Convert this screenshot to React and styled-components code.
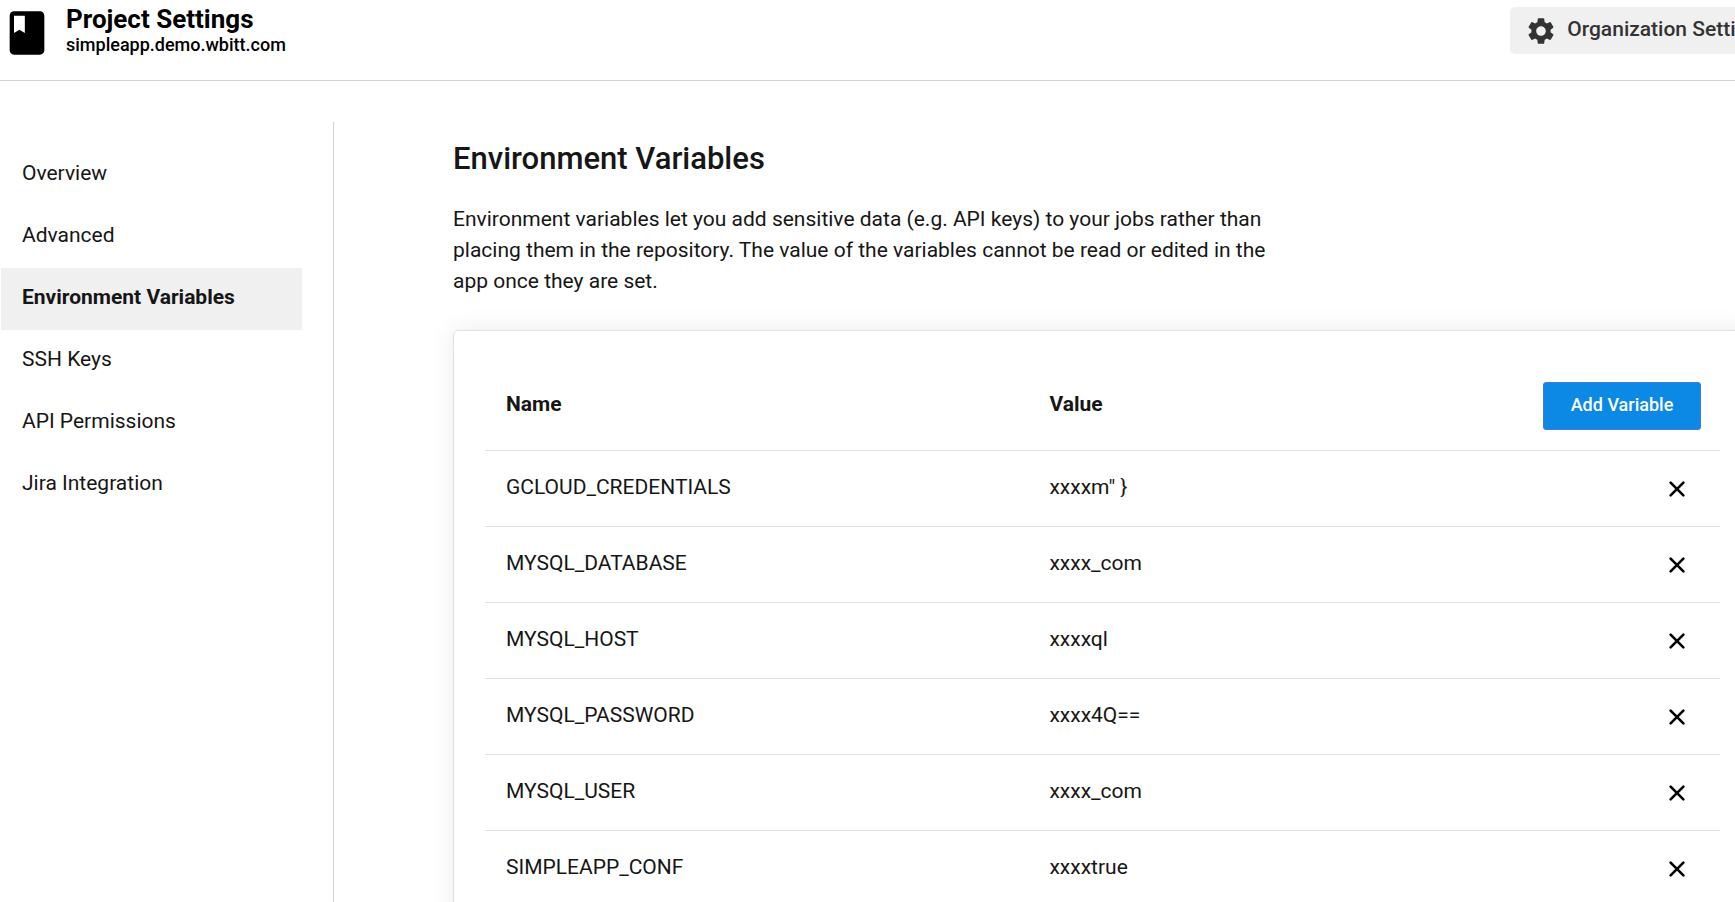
import React from "react";
import styled, { createGlobalStyle } from "styled-components";
import { MdBook, MdSettings } from "react-icons/md";

const GlobalStyle = createGlobalStyle`
  *, *::before, *::after { box-sizing: border-box; }
  html { scrollbar-width: none; }
  body {
    margin: 0;
    background: #fff;
    color: #161616;
    font-family: Roboto, "Liberation Sans", sans-serif;
    font-size: 21px;
    line-height: 31px;
  }
`;

const Page = styled.div`
  overflow-x: clip;
`;

const Header = styled.header`
  display: flex;
  align-items: flex-start;
  height: 81px;
  padding: 7px 0 0 1px;
  border-bottom: 1px solid #d2d2d2;
  color: #000;
`;

const Heading = styled.div`
  flex: 1;
  padding-left: 13px;
`;

const Title = styled.h1`
  margin: 0;
  font-size: 26px;
  font-weight: 700;
  line-height: 24px;
`;

const Domain = styled.p`
  margin: 0;
  font-size: 18px;
  font-weight: 500;
  line-height: 28px;
`;

const OrgButton = styled.button`
  display: flex;
  align-items: center;
  gap: 10px;
  height: 47px;
  margin-right: -50px;
  padding: 0 15px;
  border: 0;
  border-radius: 5px;
  background: #f0f0f0;
  color: #333;
  font: inherit;
  font-weight: 500;
  white-space: nowrap;
`;

const OrgLabel = styled.span`
  padding-bottom: 2px;
`;

const Body = styled.div`
  display: flex;
  align-items: stretch;
  padding-top: 41px;
`;

const Sidebar = styled.nav`
  flex: none;
  width: 334px;
  padding: 22px 31px 0 1px;
  border-right: 1px solid #d2d2d2;
`;

const NavLink = styled.a`
  display: flex;
  align-items: center;
  height: 62px;
  padding: 0 21px 3px;
  background: ${(p) => (p.$active ? "#f0f0f0" : "transparent")};
  color: inherit;
  font-weight: ${(p) => (p.$active ? 700 : 400)};
  text-decoration: none;
`;

const Main = styled.main`
  flex: 1;
  min-width: 0;
  margin-right: -17px;
  padding: 17px 0 40px 119px;
`;

const SectionTitle = styled.h2`
  margin: 0 0 25px;
  font-size: 31px;
  font-weight: 500;
  line-height: 40px;
`;

const Description = styled.p`
  max-width: 832px;
  margin: 0 0 33px;
`;

const Card = styled.section`
  padding: 31px;
  border: 1px solid #e0e0e0;
  border-radius: 5px;
  box-shadow: 0 0 26px rgba(0, 0, 0, 0.08);
`;

const Table = styled.table`
  width: 100%;
  table-layout: fixed;
  border-collapse: separate;
  border-spacing: 0;
`;

const Cell = styled.td`
  height: 76px;
  padding: 0 21px 2px;
  border-bottom: 1px solid #e0e0e0;
  text-align: left;
`;

const HeadCell = styled(Cell)`
  width: ${(p) => p.$width};
  height: 89px;
  padding-bottom: 4px;
  font-weight: 700;
`;

const AddCell = styled(Cell)`
  padding: 0 19px 0 0;
`;

const RemoveCell = styled(Cell)`
  padding: 0 34px 0 0;
`;

const Actions = styled.div`
  display: flex;
  justify-content: flex-end;
`;

const AddButton = styled.button`
  width: 158px;
  height: 48px;
  padding: 0 0 3px;
  border: 1px solid #3f78e8;
  border-radius: 3px;
  background: #0b89e4;
  color: #fff;
  font: inherit;
  font-size: 18px;
  font-weight: 500;
`;

const RemoveButton = styled.button`
  display: flex;
  padding: 0;
  border: 0;
  background: none;
  color: #000;
`;

const links = [
  "Overview",
  "Advanced",
  "Environment Variables",
  "SSH Keys",
  "API Permissions",
  "Jira Integration",
];

const variables = [
  ["GCLOUD_CREDENTIALS", 'xxxxm" }'],
  ["MYSQL_DATABASE", "xxxx_com"],
  ["MYSQL_HOST", "xxxxql"],
  ["MYSQL_PASSWORD", "xxxx4Q=="],
  ["MYSQL_USER", "xxxx_com"],
  ["SIMPLEAPP_CONF", "xxxxtrue"],
];

function CrossIcon() {
  return (
    <svg width="18" height="18" viewBox="0 0 18 18" aria-hidden="true">
      <path
        d="M2.6 2.6L15.4 15.4M15.4 2.6L2.6 15.4"
        stroke="currentColor"
        strokeWidth="2.6"
        strokeLinecap="round"
      />
    </svg>
  );
}

export default function App() {
  return (
    <Page>
      <GlobalStyle />
      <Header>
        <MdBook size={52} aria-hidden="true" />
        <Heading>
          <Title>Project Settings</Title>
          <Domain>simpleapp.demo.wbitt.com</Domain>
        </Heading>
        <OrgButton type="button">
          <MdSettings size={32} aria-hidden="true" />
          <OrgLabel>Organization Settings</OrgLabel>
        </OrgButton>
      </Header>
      <Body>
        <Sidebar aria-label="Project settings">
          {links.map((label) => (
            <NavLink
              key={label}
              href="#"
              $active={label === "Environment Variables"}
              aria-current={label === "Environment Variables" ? "page" : undefined}
            >
              {label}
            </NavLink>
          ))}
        </Sidebar>
        <Main>
          <SectionTitle>Environment Variables</SectionTitle>
          <Description>
            Environment variables let you add sensitive data (e.g. API keys) to
            your jobs rather than placing them in the repository. The value of
            the variables cannot be read or edited in the app once they are set.
          </Description>
          <Card>
            <Table>
              <thead>
                <tr>
                  <HeadCell as="th" scope="col" $width="44%">Name</HeadCell>
                  <HeadCell as="th" scope="col" $width="36%">Value</HeadCell>
                  <AddCell>
                    <Actions>
                      <AddButton type="button">Add Variable</AddButton>
                    </Actions>
                  </AddCell>
                </tr>
              </thead>
              <tbody>
                {variables.map(([name, value]) => (
                  <tr key={name}>
                    <Cell>{name}</Cell>
                    <Cell>{value}</Cell>
                    <RemoveCell>
                      <Actions>
                        <RemoveButton type="button" aria-label={`Remove ${name}`}>
                          <CrossIcon />
                        </RemoveButton>
                      </Actions>
                    </RemoveCell>
                  </tr>
                ))}
              </tbody>
            </Table>
          </Card>
        </Main>
      </Body>
    </Page>
  );
}
